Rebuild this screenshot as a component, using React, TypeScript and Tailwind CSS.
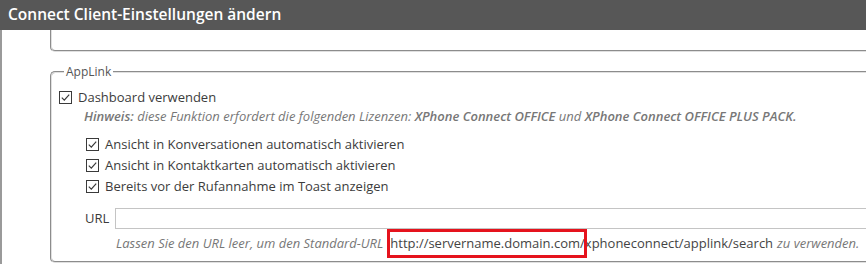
import React from "react";

function Box() {
  return (
    <svg width="13" height="13" viewBox="0 0 13 13" className="shrink-0">
      <rect x="0.5" y="0.5" width="12" height="12" fill="#fff" stroke="#3a3a3a" strokeWidth="1" />
      <polyline points="2.8,6.6 5.3,9.1 10.2,3.6" fill="none" stroke="#3a3a3a" strokeWidth="1.2" />
    </svg>
  );
}

function Row({ label }: { label: string }) {
  return (
    <div className="flex h-[21px] items-center gap-[6px] pl-[27px]">
      <Box />
      <span>{label}</span>
    </div>
  );
}

export default function App() {
  return (
    <div className="h-[275px] w-[866px] overflow-hidden bg-white text-[13px] text-[#3c3c3c] [font-family:'Open_Sans','Liberation_Sans',sans-serif]">
      <div className="flex h-[30px] items-center bg-[#575757] pl-[8px] text-[15.5px] font-semibold text-white">
        Connect Client-Einstellungen ändern
      </div>
      <div className="h-[234px] w-[1000px] border-l-2 border-[#9a9a9a]">
        <div className="ml-[48px] h-[22px] rounded-b-[5px] border-2 border-t-0 border-[#e0e0e0] [border-style:groove]" />
        <fieldset className="relative ml-[48px] mt-[12px] h-[199px] rounded-[5px] border-2 border-[#e0e0e0] [border-style:groove] pl-[7px]">
          <legend className="ml-[5px] px-[2px] text-[12px] leading-[16px] text-[#555]">AppLink</legend>
          <div className="mt-[7px] flex h-[21px] items-center gap-[6px]">
            <Box />
            <span>Dashboard verwenden</span>
          </div>
          <div className="flex h-[18px] items-center pl-[25px] italic text-[#777]">
            <span>
              <span className="font-semibold">Hinweis:</span> diese Funktion erfordert die folgenden Lizenzen:{" "}
              <span className="font-semibold">XPhone Connect OFFICE</span> und{" "}
              <span className="font-semibold">XPhone Connect OFFICE PLUS PACK.</span>
            </span>
          </div>
          <div className="mt-[8px]">
            <Row label="Ansicht in Konversationen automatisch aktivieren" />
            <Row label="Ansicht in Kontaktkarten automatisch aktivieren" />
            <Row label="Bereits vor der Rufannahme im Toast anzeigen" />
          </div>
          <div className="mt-[11px] flex h-[21px] items-center pl-[26px]">
            <span className="w-[30px]">URL</span>
            <div className="h-[21px] flex-1 border border-[#c4c4c4] bg-white" />
          </div>
          <div className="flex h-[30px] items-center pl-[57px] whitespace-nowrap">
            <span className="italic text-[#777]">Lassen Sie den URL leer, um den Standard-URL</span>
            <span className="ml-[7px] text-[#444]">
              <span className="relative">
                http://servername.domain.com/
                <span className="pointer-events-none absolute left-[-3px] right-[-2px] top-[-5px] bottom-[-6px] border-[3px] border-[#e5131d]" />
              </span>
              xphoneconnect/applink/search
            </span>
            <span className="ml-[4px] italic text-[#777]">zu verwenden.</span>
          </div>
        </fieldset>
      </div>
    </div>
  );
}
